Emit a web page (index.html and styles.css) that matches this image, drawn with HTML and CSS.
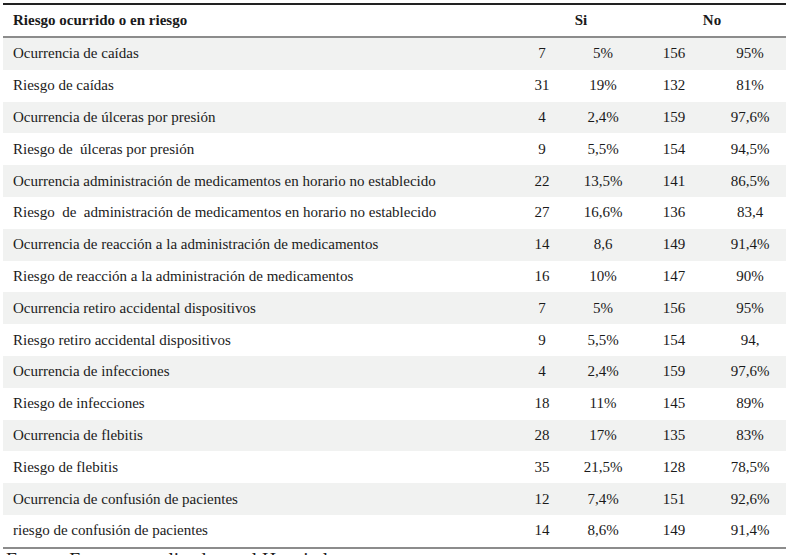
FILE: index.html
```html
<!DOCTYPE html>
<html lang="es">
<head>
<meta charset="utf-8">
<title>Tabla</title>
<link rel="stylesheet" href="styles.css">
</head>
<body>
<table class="tbl">
  <colgroup>
    <col class="c-label">
    <col class="c-n">
    <col class="c-p">
    <col class="c-n2">
    <col class="c-p2">
  </colgroup>
  <thead>
    <tr>
      <th class="lbl">Riesgo ocurrido o en riesgo</th>
      <th colspan="2" class="grp grp-si">Si</th>
      <th colspan="2" class="grp grp-no">No</th>
    </tr>
  </thead>
  <tbody>
    <tr><td>Ocurrencia de caídas</td><td>7</td><td>5%</td><td>156</td><td>95%</td></tr>
    <tr><td>Riesgo de caídas</td><td>31</td><td>19%</td><td>132</td><td>81%</td></tr>
    <tr><td>Ocurrencia de úlceras por presión</td><td>4</td><td>2,4%</td><td>159</td><td>97,6%</td></tr>
    <tr><td>Riesgo de &nbsp;úlceras por presión</td><td>9</td><td>5,5%</td><td>154</td><td>94,5%</td></tr>
    <tr><td>Ocurrencia administración de medicamentos en horario no establecido</td><td>22</td><td>13,5%</td><td>141</td><td>86,5%</td></tr>
    <tr><td>Riesgo &nbsp;de &nbsp;administración de medicamentos en horario no establecido</td><td>27</td><td>16,6%</td><td>136</td><td>83,4</td></tr>
    <tr><td>Ocurrencia de reacción a la administración de medicamentos</td><td>14</td><td>8,6</td><td>149</td><td>91,4%</td></tr>
    <tr><td>Riesgo de reacción a la administración de medicamentos</td><td>16</td><td>10%</td><td>147</td><td>90%</td></tr>
    <tr><td>Ocurrencia retiro accidental dispositivos</td><td>7</td><td>5%</td><td>156</td><td>95%</td></tr>
    <tr><td>Riesgo retiro accidental dispositivos</td><td>9</td><td>5,5%</td><td>154</td><td>94,</td></tr>
    <tr><td>Ocurrencia de infecciones</td><td>4</td><td>2,4%</td><td>159</td><td>97,6%</td></tr>
    <tr><td>Riesgo de infecciones</td><td>18</td><td>11%</td><td>145</td><td>89%</td></tr>
    <tr><td>Ocurrencia de flebitis</td><td>28</td><td>17%</td><td>135</td><td>83%</td></tr>
    <tr><td>Riesgo de flebitis</td><td>35</td><td>21,5%</td><td>128</td><td>78,5%</td></tr>
    <tr><td>Ocurrencia de confusión de pacientes</td><td>12</td><td>7,4%</td><td>151</td><td>92,6%</td></tr>
    <tr><td>riesgo de confusión de pacientes</td><td>14</td><td>8,6%</td><td>149</td><td>91,4%</td></tr>
  </tbody>
</table>
<p class="source">Fuente: Encuesta realizada en el Hospital</p>
</body>
</html>
```
FILE: styles.css
```css
html, body {
  margin: 0;
  padding: 0;
  background: #ffffff;
}
body {
  font-family: "Liberation Serif", "Times New Roman", serif;
  color: #1a1a1a;
  overflow: hidden;
}
.tbl {
  margin: 3px 0 0 3px;
  width: 783px;
  border-collapse: collapse;
  table-layout: fixed;
  font-size: 15px;
  border-top: 2px solid #222222;
  border-bottom: 2px solid #8c8c8c;
}
.c-label { width: 509px; }
.c-n { width: 60px; }
.c-p { width: 62px; }
.c-n2 { width: 80px; }
.c-p2 { width: 72px; }
.tbl thead th {
  height: 31px;
  padding: 0;
  font-weight: bold;
  border-bottom: 2px solid #8c8c8c;
  text-align: center;
  vertical-align: middle;
}
.tbl thead th.lbl {
  text-align: left;
  padding-left: 10px;
}
.tbl thead th.grp-si { padding-left: 16px; }
.tbl thead th.grp-no { padding-left: 4px; }
.tbl tbody td {
  height: 31.8px;
  padding: 0;
  text-align: center;
  vertical-align: middle;
  white-space: nowrap;
}
.tbl tbody td:first-child {
  text-align: left;
  padding-left: 10px;
}
.tbl tbody tr:nth-child(odd) {
  background: #f1f2f1;
}
.source {
  margin: 0 0 0 6px;
  padding-top: 0;
  font-size: 19.5px;
  line-height: 22px;
  color: #1a1a1a;
}
```
